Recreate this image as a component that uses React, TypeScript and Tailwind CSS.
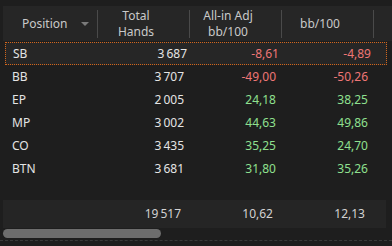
import React from "react";

const rows = [
  { pos: "SB", hands: "3\u202F687", adj: "-8,61", bb: "-4,89", sel: true },
  { pos: "BB", hands: "3\u202F707", adj: "-49,00", bb: "-50,26" },
  { pos: "EP", hands: "2\u202F005", adj: "24,18", bb: "38,25" },
  { pos: "MP", hands: "3\u202F002", adj: "44,63", bb: "49,86" },
  { pos: "CO", hands: "3\u202F435", adj: "35,25", bb: "24,70" },
  { pos: "BTN", hands: "3\u202F681", adj: "31,80", bb: "35,26" },
];

function color(v: string) {
  return v.startsWith("-") ? "text-[#ef7676]" : "text-[#8fe08f]";
}

function Divider() {
  return <div className="w-px h-[28px] bg-[#4a4a4a] shrink-0" />;
}

export default function App() {
  return (
    <div
      className="w-[392px] h-[246px] bg-[#1e1e1e] overflow-hidden flex flex-col text-[12px]"
      style={{ fontFamily: '"Noto Sans", "Open Sans", sans-serif' }}
    >
      <div className="h-[6px] shrink-0" />
      {/* header */}
      <div className="ml-[3px] h-[35px] bg-[#262626] flex items-center text-[#c9c9c9] leading-[16px]">
        <div className="w-[95px] flex items-center h-full">
          <span className="pl-[19px] flex-1">Position</span>
          <svg width="8" height="4" viewBox="0 0 8 4" className="mr-[8px]">
            <path d="M0 0 L8 0 L4 4 Z" fill="#7a7a7a" />
          </svg>
          <Divider />
        </div>
        <div className="w-[92px] flex items-center h-full">
          <div className="flex-1 text-center pr-[15px] pt-[1px]">
            Total
            <br />
            Hands
          </div>
          <Divider />
        </div>
        <div className="w-[92px] flex items-center h-full">
          <div className="flex-1 text-center pr-[15px] pt-[1px]">
            All-in Adj
            <br />
            bb/100
          </div>
          <Divider />
        </div>
        <div className="w-[92px] flex items-center h-full">
          <div className="flex-1 text-center pr-[15px]">bb/100</div>
          <Divider />
        </div>
        <div className="flex-1" />
      </div>
      {/* rows */}
      <div className="ml-[3px] w-[384px] mt-[1px] flex flex-col">
        {rows.map((r) => (
          <div
            key={r.pos}
            className={
              "h-[23px] flex items-center text-[#e4e4e4] " +
              (r.sel
                ? "bg-[#262626] border border-dotted border-[#d2661c] ml-[2px]"
                : "")
            }
          >
            <div className={"w-[95px] " + (r.sel ? "pl-[7px]" : "pl-[9px]")}>
              {r.pos}
            </div>
            <div className="w-[92px] text-right pr-[6px]">{r.hands}</div>
            <div className={"w-[92px] text-right pr-[6px] " + color(r.adj)}>{r.adj}</div>
            <div className={"w-[92px] text-right pr-[6px] " + color(r.bb)}>{r.bb}</div>
          </div>
        ))}
      </div>
      <div className="h-[20px] shrink-0" />
      {/* summary */}
      <div className="ml-[3px] w-[383px] h-[28px] bg-[#252525] flex items-center text-[#d2d2d2]">
        <div className="w-[95px]" />
        <div className="w-[92px] text-right pr-[9px]">19{"\u202F"}517</div>
        <div className="w-[92px] text-right pr-[9px]">10,62</div>
        <div className="w-[92px] text-right pr-[9px]">12,13</div>
      </div>
      {/* scrollbar */}
      <div className="ml-[3px] mt-[1px] h-[9px] w-[158px] rounded-full bg-[#6d6d6d]" />
      <div className="mt-[2px] h-px border-t border-dashed border-[#3a3a3a]" />
    </div>
  );
}
